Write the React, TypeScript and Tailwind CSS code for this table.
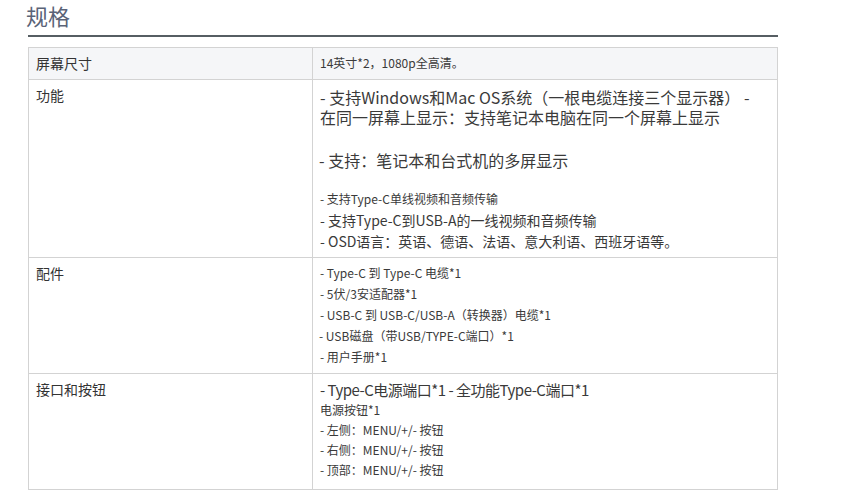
import React from "react";

const font = { fontFamily: '"Noto Sans CJK SC", "Noto Sans", sans-serif' };

function Row({
  label,
  children,
  bg = "",
  rightClass = "",
}: {
  label: string;
  children: React.ReactNode;
  bg?: string;
  rightClass?: string;
}) {
  return (
    <div className={`grid grid-cols-[283px_1fr] border-t border-[#d3d3d3] ${bg}`}>
      <div className="pl-[7px] pt-[5px] text-[14px] leading-[20px] text-[#333]">{label}</div>
      <div className={`border-l border-[#d3d3d3] pl-[7px] text-[#3a3a3a] ${rightClass}`}>{children}</div>
    </div>
  );
}

export default function App() {
  return (
    <div className="min-h-[495px] w-[843px] bg-white" style={font}>
      <div className="ml-[28px] w-[750px]">
        <div className="-ml-[2px] h-[30px] text-[22px] leading-[30px] text-[#5a6377]">规格</div>
        <div className="mt-[5px] h-[2px] bg-[#565e63]" />
        <div className="mt-[10px] border-x border-b border-[#d3d3d3]">
          <Row label="屏幕尺寸" bg="bg-[#f5f6f8]" rightClass="pt-[5px] pb-[6px] text-[12px] leading-[20px]">
            14英寸*2，1080p全高清。
          </Row>
          <Row label="功能" rightClass="pt-[7px] pb-[5px]">
            <div className="whitespace-nowrap text-[16px] leading-[20px]">- 支持Windows和Mac OS系统（一根电缆连接三个显示器） -</div>
            <div className="whitespace-nowrap text-[16px] leading-[20px]">在同一屏幕上显示：支持笔记本电脑在同一个屏幕上显示</div>
            <div className="mt-[23px] -ml-[1px] text-[16px] leading-[20px]">- 支持：笔记本和台式机的多屏显示</div>
            <div className="mt-[18px] text-[12px] leading-[21px]">- 支持Type-C单线视频和音频传输</div>
            <div className="text-[14px] leading-[22px]">- 支持Type-C到USB-A的一线视频和音频传输</div>
            <div className="text-[14px] leading-[21px]">- OSD语言：英语、德语、法语、意大利语、西班牙语等。</div>
          </Row>
          <Row label="配件" rightClass="pt-[4px] pb-[6px] text-[12px] leading-[21px]">
            <div>- Type-C 到 Type-C 电缆*1</div>
            <div>- 5伏/3安适配器*1</div>
            <div>- USB-C 到 USB-C/USB-A（转换器）电缆*1</div>
            <div className="-ml-[1px]">- USB磁盘（带USB/TYPE-C端口）*1</div>
            <div>- 用户手册*1</div>
          </Row>
          <Row label="接口和按钮" rightClass="pt-[6px] pb-[9px] text-[12px] leading-[20px]">
            <div className="whitespace-nowrap text-[15px] leading-[20px] tracking-[-0.5px]">- Type-C电源端口*1 - 全功能Type-C端口*1</div>
            <div>电源按钮*1</div>
            <div>- 左侧：MENU/+/- 按钮</div>
            <div>- 右侧：MENU/+/- 按钮</div>
            <div>- 顶部：MENU/+/- 按钮</div>
          </Row>
        </div>
      </div>
    </div>
  );
}
